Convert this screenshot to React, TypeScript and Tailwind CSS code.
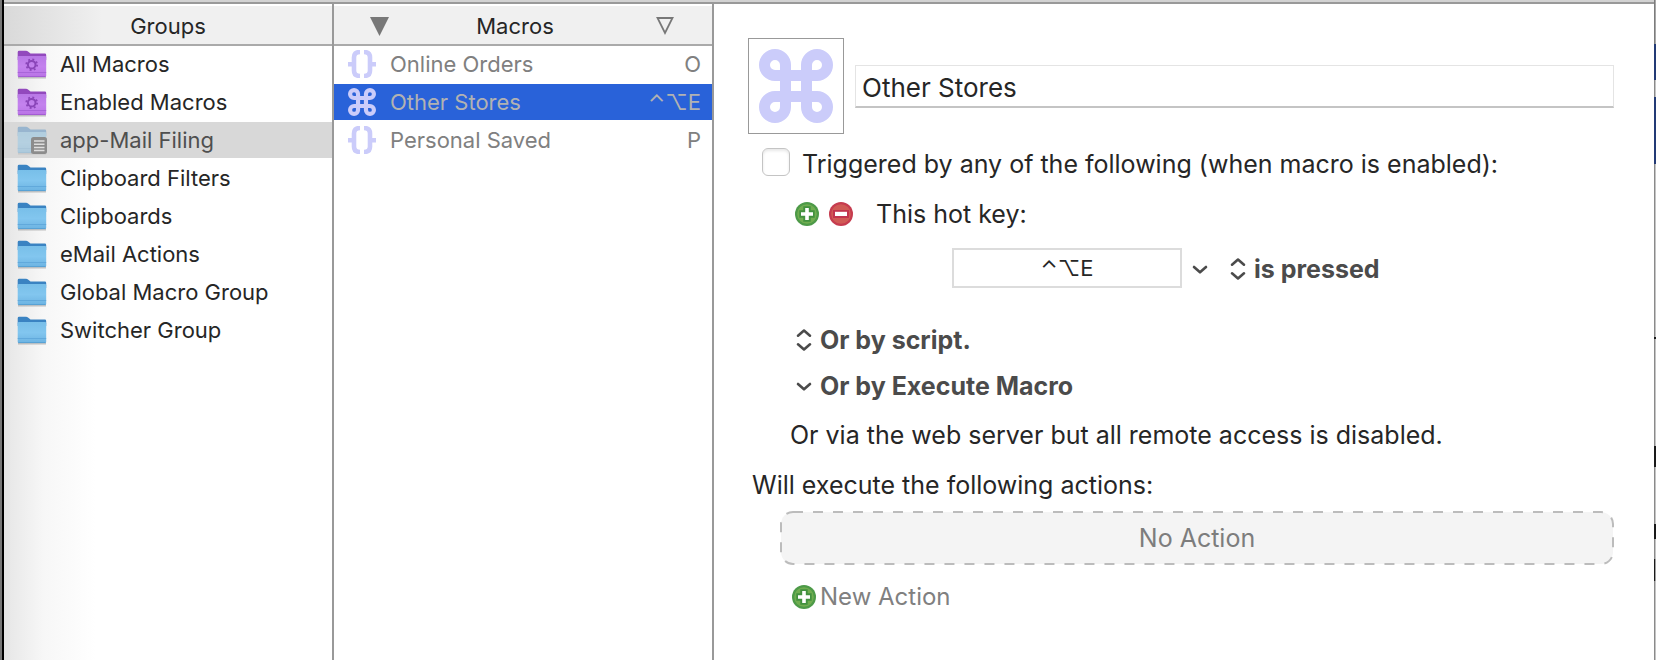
import React, { useState } from 'react'

const groups = [
  { name: 'All Macros', kind: 'smart' },
  { name: 'Enabled Macros', kind: 'smart' },
  { name: 'app-Mail Filing', kind: 'app' },
  { name: 'Clipboard Filters', kind: 'plain' },
  { name: 'Clipboards', kind: 'plain' },
  { name: 'eMail Actions', kind: 'plain' },
  { name: 'Global Macro Group', kind: 'plain' },
  { name: 'Switcher Group', kind: 'plain' },
]

const macros = [
  { name: 'Online Orders', trigger: 'O', icon: 'braces' },
  { name: 'Other Stores', trigger: '⌃⌥E', icon: 'command' },
  { name: 'Personal Saved', trigger: 'P', icon: 'braces' },
]

// Slivers of the windows behind, along the right edge
const backdrop = [
  'h-[44px] border-l border-[#7c7c7c] bg-[#a8a8a8]',
  'h-[36px] bg-[#233a75]',
  'h-[17px] border-l border-[#8a8a8a] bg-[#c4c4c4]',
  'h-[67px] bg-[#233a75]',
  'h-[173px] border-l border-[#8a8a8a] bg-[#c4c4c4]',
  'h-[2px] bg-[#1a1a1a]',
  'h-[107px] border-l border-[#8a8a8a] bg-[#c4c4c4]',
  'h-[21px] bg-[#1a1a1a]',
  'h-[57px] border-l border-[#8a8a8a] bg-[#c4c4c4]',
  'h-[15px] bg-[#1a1a1a]',
  'h-[20px] border-l border-[#8a8a8a] bg-[#c4c4c4]',
  'h-[22px] border-l border-[#1a1a1a] bg-[#a0a0a0]',
  'grow border-l border-[#8a8a8a] bg-[#c4c4c4]',
]

function FolderIcon({ kind }: { kind: string }) {
  const smart = kind === 'smart'
  return (
    <svg className="size-8 shrink-0" viewBox="0 0 32 32" aria-hidden="true">
      <defs>
        <linearGradient id={`front-${kind}`} x1="0" y1="0" x2="0" y2="1">
          <stop offset="0" stopColor={smart ? '#b878e6' : '#78bfe9'} />
          <stop offset="0.5" stopColor={smart ? '#c482ee' : '#82c6ef'} />
          <stop offset="1" stopColor={smart ? '#b973e6' : '#6cb3e2'} />
        </linearGradient>
      </defs>
      <g opacity={kind === 'app' ? 0.4 : 1}>
        <path d="M2 29.800h28" stroke="#8a8a8a" strokeWidth="1.400" opacity="0.5" />
        <path
          d="M1.700 4.200q0-1.400 1.400-1.400H10q1.200 0 2 .8l1.900 1.500q.5.500 1.300.5H28.800q1.400 0 1.400 1.400V12H1.700z"
          fill={smart ? '#9249bd' : '#3a83c2'}
        />
        <path d="M1.700 9.200q0-1.200 1.200-1.200H29q1.200 0 1.200 1.200V27.800q0 1.200-1.200 1.200H2.900Q1.700 29 1.700 27.800z" fill={`url(#front-${kind})`} />
        <path d="M1.700 24.500h28.500" stroke={smart ? '#a25fd4' : '#5ca5d8'} strokeWidth="0.8" />
        <path d="M2.200 28.600h27.500" stroke={smart ? '#9a54cc' : '#4f9acf'} strokeWidth="0.8" />
      </g>
      {smart && (
        <g stroke="#8a45b8" fill="none">
          <circle cx="15.700" cy="16.700" r="3.800" strokeWidth="2" />
          <circle cx="15.700" cy="16.700" r="5.400" strokeWidth="1.800" strokeDasharray="1.900 2.341" />
        </g>
      )}
      {kind === 'app' && (
        <g>
          <rect x="15" y="13" width="16" height="17" rx="2.500" fill="#8c8c8c" />
          <path d="M18 17h10.500M18 20.200h10.500M18 23.400h10.500M18 26.600h10.500" stroke="#dedede" strokeWidth="1.500" />
        </g>
      )}
    </svg>
  )
}

function CommandIcon({ className }: { className: string }) {
  return (
    <svg className={className} viewBox="0 0 74 74" fill="none" stroke="#cbccfa" strokeWidth="11" aria-hidden="true">
      <path d="M47.500 16V58a10.500 10.500 0 1 0 10.500-10.500H16a10.500 10.500 0 1 0 10.500 10.500V16a10.500 10.500 0 1 0-10.500 10.500H58a10.500 10.500 0 1 0-10.500-10.500z" />
    </svg>
  )
}

function BracesIcon() {
  return (
    <svg className="size-7 shrink-0" viewBox="0 0 28 28" fill="none" stroke="#cbccfa" strokeWidth="4.600" aria-hidden="true">
      <path d="M12 2C7.500 2 6 4 6 7.500V20.500C6 24 7.500 26 12 26M0 14.300H6" />
      <path d="M16 2C20.500 2 22 4 22 7.500V20.500C22 24 20.500 26 16 26M22 14.300H28" />
    </svg>
  )
}

function PlusIcon() {
  return (
    <svg className="size-6 shrink-0" viewBox="0 0 24 24" aria-hidden="true">
      <circle cx="12" cy="12" r="12" fill="#4d9a48" />
      <circle cx="12" cy="12" r="9.800" fill="#70ad50" />
      <path d="M8.300 4.300h7.400v4h4v7.400h-4v4H8.300v-4h-4V8.300h4z" fill="#42913f" />
      <path d="M10.200 6h3.600v4.200H18v3.600h-4.200V18h-3.600v-4.200H6v-3.600h4.200z" fill="#fff" />
    </svg>
  )
}

function MinusIcon() {
  return (
    <svg className="size-6 shrink-0" viewBox="0 0 24 24" aria-hidden="true">
      <circle cx="12" cy="12" r="12" fill="#c63c4f" />
      <circle cx="12" cy="12" r="9.800" fill="#d05a55" />
      <path d="M4 8h16v8H4z" fill="#c2354d" />
      <path d="M6 9.800h12v4.200H6z" fill="#fff" />
    </svg>
  )
}

function DownIcon() {
  return (
    <svg className="h-6 w-4 shrink-0" viewBox="0 0 16 24" fill="none" stroke="#4b4b4b" strokeWidth="2.600" strokeLinecap="round" strokeLinejoin="round" aria-hidden="true">
      <path d="M2 10l6 5.300 6-5.300" />
    </svg>
  )
}

function UpDownIcon() {
  return (
    <svg className="h-6 w-4 shrink-0" viewBox="0 0 16 24" fill="none" stroke="#4b4b4b" strokeWidth="2.600" strokeLinecap="round" strokeLinejoin="round" aria-hidden="true">
      <path d="M2 7.700l6-5.200 6 5.200M2 16.300l6 5.200 6-5.200" />
    </svg>
  )
}

interface PopUpProps {
  label: string
  value: string
  icon: React.ReactNode
}

function PopUp({ label, value, icon }: PopUpProps) {
  return (
    <label className="flex items-center gap-2">
      {icon}
      <select aria-label={label} className="appearance-none bg-transparent font-bold text-[#4b4b4b] outline-none">
        <option>{value}</option>
      </select>
    </label>
  )
}

function GroupsColumn() {
  const [selected, setSelected] = useState('app-Mail Filing')

  return (
    <section className="w-[330px] shrink-0 border-r-2 border-[#999999] bg-linear-to-r from-[#e6e6e6] via-[#f7f7f7] via-12% to-white to-28%">
      <h2 className="flex h-[42px] items-center justify-center border-t-2 border-b-2 border-t-white border-b-[#aaaaaa] bg-linear-to-r from-[#d9d9d9] to-[#f0f0f0] to-30% pt-0.5">
        Groups
      </h2>
      <ul className="flex flex-col gap-0.5">
        {groups.map((group) => (
          <li key={group.name}>
            <button
              onClick={() => setSelected(group.name)}
              className={`flex h-9 w-full items-center gap-3 pl-3 text-left ${
                group.name === selected ? 'bg-[#d8d8d8] text-[#4f4f4f]' : ''
              }`}
            >
              <FolderIcon kind={group.kind} />
              {group.name}
            </button>
          </li>
        ))}
      </ul>
    </section>
  )
}

function MacrosColumn() {
  const [selected, setSelected] = useState('Other Stores')

  return (
    <section className="w-[380px] shrink-0 border-r-2 border-[#999999]">
      <header className="flex h-[42px] items-center justify-between border-t-2 border-b-2 border-t-white border-b-[#aaaaaa] bg-[#f0f0f0] px-9 pt-0.5">
        <button aria-label="Filter macros">
          <svg className="size-5" viewBox="0 0 20 20" aria-hidden="true">
            <path d="M0 1h19l-9.500 19z" fill="#787878" />
          </svg>
        </button>
        <h2 className="mr-4">Macros</h2>
        <button aria-label="Sort macros">
          <svg className="size-5" viewBox="0 0 20 20" fill="none" stroke="#787878" strokeWidth="1.800" aria-hidden="true">
            <path d="M1.500 2h15L9 17z" />
          </svg>
        </button>
      </header>
      <ul className="flex flex-col gap-0.5">
        {macros.map((macro) => (
          <li key={macro.name}>
            <button
              onClick={() => setSelected(macro.name)}
              className={`flex h-9 w-full items-center gap-3.5 pr-[11px] pl-3.5 text-left ${
                macro.name === selected ? 'bg-[#2962d9] text-[#b2b2b2]' : 'text-[#808080]'
              }`}
            >
              {macro.icon === 'command' ? <CommandIcon className="size-7 shrink-0" /> : <BracesIcon />}
              <span className="grow">{macro.name}</span>
              <span>{macro.trigger}</span>
            </button>
          </li>
        ))}
      </ul>
    </section>
  )
}

function MacroEditor() {
  const [name, setName] = useState('Other Stores')

  return (
    <main className="flex min-w-0 grow flex-col pt-[34px] pr-10 pl-[34px] text-[25px] leading-8">
      <div className="flex items-center gap-[11px]">
        <button aria-label="Macro icon" className="flex size-24 shrink-0 items-center justify-center border border-[#999999]">
          <CommandIcon className="size-[74px]" />
        </button>
        <input
          aria-label="Macro name"
          value={name}
          onChange={(e) => setName(e.target.value)}
          className="h-[43px] min-w-0 grow border border-b-2 border-[#e4e4e4] border-b-[#c4c4c4] px-1.5 pt-1 text-[26px] outline-none"
        />
      </div>

      <label className="mt-3.5 flex items-start gap-3 pl-3.5">
        <input
          type="checkbox"
          className="size-7 shrink-0 appearance-none rounded-md border border-[#c4c4c4] bg-white shadow-[inset_0_2px_3px_#e8e8e8]"
        />
        Triggered by any of the following (when macro is enabled):
      </label>

      <div className="mt-[18px] flex items-center pl-[47px]">
        <button aria-label="Add trigger" className="mr-2.5">
          <PlusIcon />
        </button>
        <button aria-label="Remove trigger" className="mr-[23px]">
          <MinusIcon />
        </button>
        <label htmlFor="hotkey">This hot key:</label>
      </div>

      <div className="mt-[18px] flex items-center pl-[204px]">
        <input
          id="hotkey"
          defaultValue="⌃⌥E"
          className="mr-2.5 h-10 w-[230px] border-2 border-[#dcdcdc] text-center text-[22px] outline-none"
        />
        <button aria-label="Hot key options" className="mr-[22px] pt-0.5">
          <DownIcon />
        </button>
        <div className="pt-0.5">
          <PopUp label="Hot key event" value="is pressed" icon={<UpDownIcon />} />
        </div>
      </div>

      <div className="mt-9 flex flex-col gap-3.5 pl-12">
        <PopUp label="Script trigger" value="Or by script." icon={<UpDownIcon />} />
        <PopUp label="Execute Macro trigger" value="Or by Execute Macro" icon={<DownIcon />} />
      </div>
      <p className="mt-[17px] pl-[42px]">Or via the web server but all remote access is disabled.</p>

      <h3 className="mt-[18px] pl-1">Will execute the following actions:</h3>
      <div className="relative mt-2.5 ml-8 flex h-[54px] items-center justify-center rounded-xl text-[#7d7d7d]">
        <svg className="absolute inset-px h-[calc(100%-2px)] w-[calc(100%-2px)] overflow-visible" aria-hidden="true">
          <rect width="100%" height="100%" rx="12" fill="#f4f4f4" stroke="#bcbcbc" strokeWidth="2" strokeDasharray="10 10" />
        </svg>
        <span className="relative">No Action</span>
      </div>
      <button className="mt-4 ml-11 flex items-center gap-1 self-start text-2xl leading-8 text-[#808080]">
        <PlusIcon />
        New Action
      </button>
    </main>
  )
}

export default function App() {
  return (
    <div className="flex min-h-screen bg-white font-[Inter,'DejaVu_Sans',sans-serif] text-[22px] leading-7 text-[#262626]">
      <div className="w-1 shrink-0 border-r-2 border-black bg-[#777777]" />
      <div className="flex min-w-0 grow flex-col">
        <div className="h-1 shrink-0 border-b-2 border-[#999999] bg-[#d2d2d2]" />
        <div className="flex min-w-0 grow">
          <GroupsColumn />
          <MacrosColumn />
          <MacroEditor />
        </div>
      </div>
      <div className="flex w-0.5 shrink-0 flex-col">
        {backdrop.map((strip, index) => (
          <div key={index} className={strip} />
        ))}
      </div>
    </div>
  )
}
